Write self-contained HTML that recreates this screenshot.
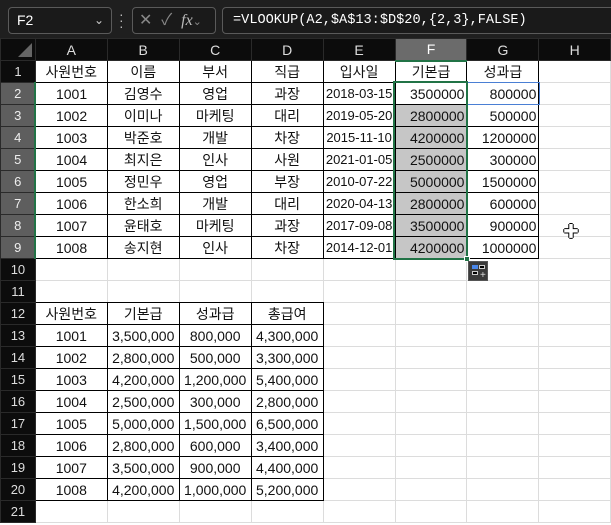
<!DOCTYPE html>
<html><head><meta charset="utf-8"><style>
*{box-sizing:border-box;margin:0;padding:0}
body{width:611px;height:525px;overflow:hidden;background:#fff;position:relative;font-family:"Liberation Sans","Noto Sans CJK KR",sans-serif}
#top{position:absolute;left:0;top:0;width:611px;height:38px;background:#1f1f1f}
.box{position:absolute;border:1px solid #5a5a5a;border-radius:4px;background:#1a1a1a;color:#fff}
table{position:absolute;left:0;top:38px;border-collapse:collapse;table-layout:fixed}
td{height:22px;border:1px solid #dcdcdc;font-size:14px;text-align:center;color:#111;white-space:nowrap;overflow:hidden;padding:0 2px;line-height:20px}
tr.h td{background:#0c0c0c;color:#ddd;border-color:#2a2a2a;height:22px}
td.r{background:#0c0c0c;color:#ddd;border-color:#2a2a2a;font-size:13px}
td.rs{background:#5e5e5e;color:#eee;border-color:#2a2a2a;font-size:13px;border-right:2px solid #217346}
td.b{border-color:#000}
td.k{border-bottom-color:#000}
td.l{border-left-color:#000}
td.n{text-align:right}
td.g{background:#c6c6c6}
</style></head><body>
<div id="top">
 <div class="box" style="left:8px;top:7px;width:104px;height:27px;font-size:14px;line-height:25px;padding-left:8px">F2<span style="position:absolute;right:7px;top:0;color:#ccc;font-size:12px">&#8964;</span></div>
 <div style="position:absolute;left:119px;top:11px;color:#bbb;font-size:14px;line-height:6px">&middot;<br>&middot;<br>&middot;</div>
 <div class="box" style="left:132px;top:7px;width:84px;height:27px;color:#888;font-size:16px;line-height:25px;padding-left:6px">✕&nbsp;&nbsp;✓&nbsp;&nbsp;<i style="font-family:'Liberation Serif',serif;color:#bbb">fx</i><span style="font-size:11px">&#8964;</span></div>
 <div class="box" style="left:222px;top:7px;width:400px;height:27px;font-family:'Liberation Mono',monospace;font-size:13.6px;line-height:25px;padding-left:10px">=VLOOKUP(A2,$A$13:$D$20,{2,3},FALSE)</div>
</div>
<table>
<colgroup><col style="width:35px"><col style="width:72px"><col style="width:72px"><col style="width:72px"><col style="width:72px"><col style="width:72px"><col style="width:72px"><col style="width:72px"><col style="width:72px"></colgroup>
<tr class="h"><td style="position:relative"><div style="position:absolute;right:3px;bottom:3px;width:0;height:0;border-left:14px solid transparent;border-bottom:14px solid #666"></div></td><td>A</td><td>B</td><td>C</td><td>D</td><td>E</td><td style="background:#6b6b6b;border-bottom:2px solid #217346;color:#fff">F</td><td>G</td><td>H</td></tr>
<tr><td class="r">1</td><td class="b">사원번호</td><td class="b">이름</td><td class="b">부서</td><td class="b">직급</td><td class="b">입사일</td><td class="b">기본급</td><td class="b">성과급</td><td class="l"></td></tr>
<tr><td class="rs">2</td><td class="b">1001</td><td class="b">김영수</td><td class="b">영업</td><td class="b">과장</td><td class="b" style="font-size:13px">2018-03-15</td><td class="b n">3500000</td><td class="b n">800000</td><td class="l"></td></tr>
<tr><td class="rs">3</td><td class="b">1002</td><td class="b">이미나</td><td class="b">마케팅</td><td class="b">대리</td><td class="b" style="font-size:13px">2019-05-20</td><td class="b n g">2800000</td><td class="b n">500000</td><td class="l"></td></tr>
<tr><td class="rs">4</td><td class="b">1003</td><td class="b">박준호</td><td class="b">개발</td><td class="b">차장</td><td class="b" style="font-size:13px">2015-11-10</td><td class="b n g">4200000</td><td class="b n">1200000</td><td class="l"></td></tr>
<tr><td class="rs">5</td><td class="b">1004</td><td class="b">최지은</td><td class="b">인사</td><td class="b">사원</td><td class="b" style="font-size:13px">2021-01-05</td><td class="b n g">2500000</td><td class="b n">300000</td><td class="l"></td></tr>
<tr><td class="rs">6</td><td class="b">1005</td><td class="b">정민우</td><td class="b">영업</td><td class="b">부장</td><td class="b" style="font-size:13px">2010-07-22</td><td class="b n g">5000000</td><td class="b n">1500000</td><td class="l"></td></tr>
<tr><td class="rs">7</td><td class="b">1006</td><td class="b">한소희</td><td class="b">개발</td><td class="b">대리</td><td class="b" style="font-size:13px">2020-04-13</td><td class="b n g">2800000</td><td class="b n">600000</td><td class="l"></td></tr>
<tr><td class="rs">8</td><td class="b">1007</td><td class="b">윤태호</td><td class="b">마케팅</td><td class="b">과장</td><td class="b" style="font-size:13px">2017-09-08</td><td class="b n g">3500000</td><td class="b n">900000</td><td class="l"></td></tr>
<tr><td class="rs">9</td><td class="b">1008</td><td class="b">송지현</td><td class="b">인사</td><td class="b">차장</td><td class="b" style="font-size:13px">2014-12-01</td><td class="b n g">4200000</td><td class="b n">1000000</td><td class="l"></td></tr>
<tr><td class="r">10</td><td></td><td></td><td></td><td></td><td></td><td></td><td></td><td></td></tr>
<tr><td class="r">11</td><td class="k"></td><td class="k"></td><td class="k"></td><td class="k"></td><td></td><td></td><td></td><td></td></tr>
<tr><td class="r">12</td><td class="b">사원번호</td><td class="b">기본급</td><td class="b">성과급</td><td class="b">총급여</td><td class="l"></td><td></td><td></td><td></td></tr>
<tr><td class="r">13</td><td class="b">1001</td><td class="b">3,500,000</td><td class="b">800,000</td><td class="b">4,300,000</td><td class="l"></td><td></td><td></td><td></td></tr>
<tr><td class="r">14</td><td class="b">1002</td><td class="b">2,800,000</td><td class="b">500,000</td><td class="b">3,300,000</td><td class="l"></td><td></td><td></td><td></td></tr>
<tr><td class="r">15</td><td class="b">1003</td><td class="b">4,200,000</td><td class="b">1,200,000</td><td class="b">5,400,000</td><td class="l"></td><td></td><td></td><td></td></tr>
<tr><td class="r">16</td><td class="b">1004</td><td class="b">2,500,000</td><td class="b">300,000</td><td class="b">2,800,000</td><td class="l"></td><td></td><td></td><td></td></tr>
<tr><td class="r">17</td><td class="b">1005</td><td class="b">5,000,000</td><td class="b">1,500,000</td><td class="b">6,500,000</td><td class="l"></td><td></td><td></td><td></td></tr>
<tr><td class="r">18</td><td class="b">1006</td><td class="b">2,800,000</td><td class="b">600,000</td><td class="b">3,400,000</td><td class="l"></td><td></td><td></td><td></td></tr>
<tr><td class="r">19</td><td class="b">1007</td><td class="b">3,500,000</td><td class="b">900,000</td><td class="b">4,400,000</td><td class="l"></td><td></td><td></td><td></td></tr>
<tr><td class="r">20</td><td class="b">1008</td><td class="b">4,200,000</td><td class="b">1,000,000</td><td class="b">5,200,000</td><td class="l"></td><td></td><td></td><td></td></tr>
<tr><td class="r">21</td><td></td><td></td><td></td><td></td><td></td><td></td><td></td><td></td></tr>
</table>
<div style="position:absolute;left:466px;top:82px;width:74px;height:23px;border:1px solid #4a7fd4"></div>
<div style="position:absolute;left:393px;top:81px;width:75px;height:179px;border:2px solid #217346"></div>
<div style="position:absolute;left:464px;top:256px;width:6px;height:6px;background:#217346;border:1px solid #fff"></div>
<div style="position:absolute;left:468px;top:261px;width:20px;height:20px;background:#3a3a3a;border:1px solid #555">
 <div style="position:absolute;left:3px;top:3px;width:6px;height:4px;background:#4a86e8"></div>
 <div style="position:absolute;left:10px;top:3px;width:6px;height:4px;background:#000;border:1px solid #ccc"></div>
 <div style="position:absolute;left:3px;top:9px;width:6px;height:4px;background:#000;border:1px solid #ccc"></div>
 <div style="position:absolute;left:11px;top:10px;color:#ddd;font-size:10px;line-height:8px">+</div>
</div>
<div style="position:absolute;left:563px;top:226px;color:#fff;font-size:16px;line-height:14px;text-shadow:1px 0 0 #000,-1px 0 0 #000,0 1px 0 #000,0 -1px 0 #000">✚</div>
</body></html>
